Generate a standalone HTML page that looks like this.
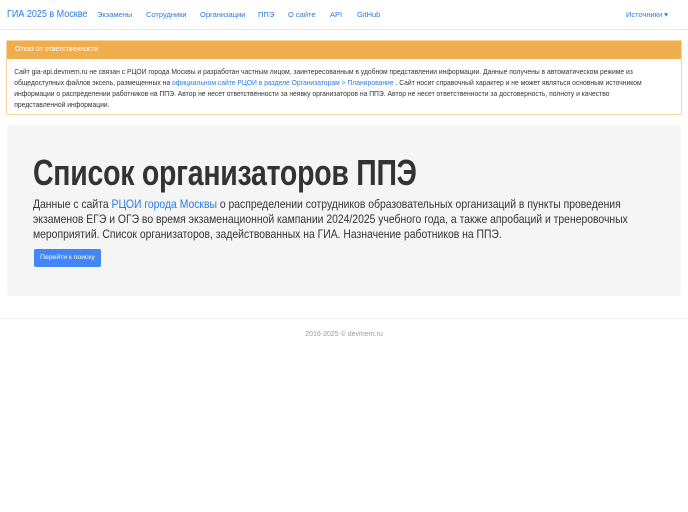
<!DOCTYPE html>
<html><head><meta charset="utf-8"><style>
*{box-sizing:border-box;margin:0;padding:0}
body{width:688px;height:512px;background:#fff;font-family:"Liberation Sans","DejaVu Sans",sans-serif;color:#333;position:relative;overflow:hidden}
a{color:#2a7ae2;text-decoration:none}
.nav{position:absolute;left:0;top:0;width:688px;height:30px;border-bottom:1px solid #e7e7e7;background:#fff}
.nav span{position:absolute;top:10px;font-size:7.5px;color:#2a7ae2}
.brand{position:absolute;left:7px;top:9px;font-size:10px;color:#2a7ae2;transform:scaleX(0.9);transform-origin:left;white-space:nowrap}
.panel{position:absolute;left:6px;top:40px;width:676px;height:75px;border:1px solid #f5d59a;border-radius:2px}
.ph{height:18px;background:#f0ad4e;color:#fff;font-size:7px;padding:5px 8px}
.pb{font-size:7.5px;line-height:11px;padding:7px 8px;color:#333;width:735px;transform:scaleX(0.9);transform-origin:left top}
.jumbo{position:absolute;left:7px;top:125px;width:674px;height:171px;background:#f5f5f5;border-radius:3px}
h1{position:absolute;left:26px;top:27px;font-size:36px;font-weight:bold;color:#333;letter-spacing:-0.3px;transform:scaleX(0.79);transform-origin:left;white-space:nowrap}
.jp{position:absolute;left:26px;top:72px;width:690px;font-size:11.8px;line-height:15px;color:#333;transform:scaleX(0.88);transform-origin:left top}
.btn{position:absolute;left:27px;top:124px;width:67px;height:18px;background:#4285f4;border-radius:2px;color:#fff;font-size:6.8px;text-align:center;line-height:18px}
.foot{position:absolute;left:0;top:318px;width:688px;border-top:1px solid #eee;text-align:center;font-size:7px;color:#999;padding-top:12px}
</style></head><body>
<div class="nav">
<div class="brand">ГИА 2025 в Москве</div>
<span style="left:97px">Экзамены</span>
<span style="left:146px">Сотрудники</span>
<span style="left:200px">Организации</span>
<span style="left:258px">ППЭ</span>
<span style="left:288px">О сайте</span>
<span style="left:330px">API</span>
<span style="left:357px">GitHub</span>
<span style="left:626px">Источники ▾</span>
</div>
<div class="panel">
<div class="ph">Отказ от ответственности</div>
<div class="pb">Сайт gia-api.devmem.ru не связан с РЦОИ города Москвы и разработан частным лицом, заинтересованным в удобном представлении информации. Данные получены в автоматическом режиме из общедоступных файлов эксель, размещенных на <a>официальном сайте РЦОИ в разделе Организаторам &gt; Планирование</a> . Сайт носит справочный характер и не может являться основным источником информации о распределении работников на ППЭ. Автор не несет ответственности за неявку организаторов на ППЭ. Автор не несет ответственности за достоверность, полноту и качество представленной информации.</div>
</div>
<div class="jumbo">
<h1>Список организаторов ППЭ</h1>
<div class="jp">Данные с сайта <a>РЦОИ города Москвы</a> о распределении сотрудников образовательных организаций в пункты проведения экзаменов ЕГЭ и ОГЭ во время экзаменационной кампании 2024/2025 учебного года, а также апробаций и тренеровочных мероприятий. Список организаторов, задействованных на ГИА. Назначение работников на ППЭ.</div>
<div class="btn">Перейти к поиску</div>
</div>
<div class="foot">2016-2025 © devmem.ru</div>
</body></html>
